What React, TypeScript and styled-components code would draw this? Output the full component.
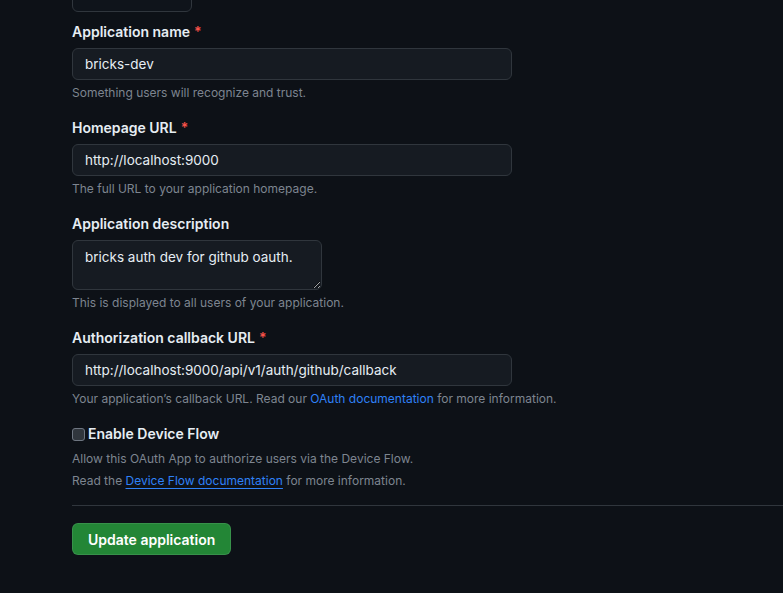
import React from "react";
import styled, { createGlobalStyle } from "styled-components";

const GlobalStyle = createGlobalStyle`
  html, body {
    margin: 0;
    padding: 0;
    background: #0d1117;
    overflow: hidden;
  }
  body {
    font-family: Inter, "Liberation Sans", sans-serif;
    color: #e6edf3;
  }
`;

const Page = styled.div`
  width: 783px;
  height: 593px;
  background: #0d1117;
  padding-left: 72px;
  box-sizing: border-box;
  overflow: hidden;
`;

const Form = styled.form`
  display: flex;
  flex-direction: column;
`;

// the button from the section above, cut off by the top of the view
const CutOffButton = styled.div`
  width: 120px;
  height: 32px;
  margin-top: -20px;
  margin-bottom: 10px;
  box-sizing: border-box;
  border: 1px solid #30363d;
  border-radius: 6px;
  background: #0f141b;
`;

const Group = styled.div`
  display: flex;
  flex-direction: column;
  margin-bottom: 16px;
`;

const Label = styled.label`
  font-size: 14px;
  font-weight: 600;
  line-height: 20px;
  margin-bottom: 6px;
  color: #e6edf3;
`;

const Required = styled.span`
  color: #f85149;
  margin-left: 4px;
  font-weight: 600;
`;

const TextInput = styled.input`
  width: 440px;
  height: 32px;
  box-sizing: border-box;
  padding: 5px 12px;
  font-family: Inter, "Liberation Sans", sans-serif;
  font-size: 13.5px;
  line-height: 20px;
  color: #e6edf3;
  background: #161b22;
  border: 1px solid #30363d;
  border-radius: 6px;
  outline: none;
`;

const TextArea = styled.textarea`
  width: 250px;
  height: 50px;
  box-sizing: border-box;
  padding: 6px 12px;
  font-family: Inter, "Liberation Sans", sans-serif;
  font-size: 13.5px;
  line-height: 20px;
  color: #e6edf3;
  background: #161b22;
  border: 1px solid #30363d;
  border-radius: 6px;
  outline: none;
  resize: both;
  color-scheme: dark;
`;

const Note = styled.p<{ $gap?: number }>`
  margin: ${(p) => p.$gap ?? 4}px 0 0;
  font-size: 12px;
  line-height: 18px;
  color: #7d8590;
`;

const Link = styled.a<{ $underline?: boolean }>`
  color: #2f81f7;
  text-decoration: ${(p) => (p.$underline ? "underline" : "none")};
  text-underline-offset: 3px;
`;

const CheckRow = styled.label`
  display: flex;
  align-items: center;
  gap: 3px;
  font-size: 14px;
  font-weight: 600;
  line-height: 20px;
  color: #e6edf3;
`;

const CheckBox = styled.span`
  width: 13px;
  height: 13px;
  box-sizing: border-box;
  border: 1px solid #6e7681;
  border-radius: 3px;
  background: #30363d;
`;

const Divider = styled.hr`
  margin: 15px 0 17px;
  border: 0;
  border-top: 1px solid #30363d;
  width: 100%;
`;

const SubmitButton = styled.button`
  align-self: flex-start;
  height: 32px;
  padding: 0 15px;
  font-family: Inter, "Liberation Sans", sans-serif;
  font-size: 14px;
  font-weight: 600;
  color: #ffffff;
  background: #238636;
  border: 1px solid rgba(240, 246, 252, 0.1);
  border-radius: 6px;
`;

const App: React.FC = () => {
  return (
    <>
      <GlobalStyle />
      <Page>
        <Form onSubmit={(e) => e.preventDefault()}>
          <CutOffButton />

          <Group>
            <Label>
              Application name<Required>*</Required>
            </Label>
            <TextInput defaultValue="bricks-dev" />
            <Note>Something users will recognize and trust.</Note>
          </Group>

          <Group>
            <Label>
              Homepage URL<Required>*</Required>
            </Label>
            <TextInput defaultValue="http://localhost:9000" />
            <Note>The full URL to your application homepage.</Note>
          </Group>

          <Group>
            <Label>Application description</Label>
            <TextArea defaultValue="bricks auth dev for github oauth." />
            <Note>This is displayed to all users of your application.</Note>
          </Group>

          <Group>
            <Label>
              Authorization callback URL<Required>*</Required>
            </Label>
            <TextInput defaultValue="http://localhost:9000/api/v1/auth/github/callback" />
            <Note>
              Your application’s callback URL. Read our{" "}
              <Link href="#">OAuth documentation</Link> for more information.
            </Note>
          </Group>

          <Group style={{ marginBottom: 0 }}>
            <CheckRow>
              <CheckBox />
              Enable Device Flow
            </CheckRow>
            <Note $gap={6}>Allow this OAuth App to authorize users via the Device Flow.</Note>
            <Note>
              Read the <Link href="#" $underline>Device Flow documentation</Link> for
              more information.
            </Note>
          </Group>

          <Divider />

          <SubmitButton type="submit">Update application</SubmitButton>
        </Form>
      </Page>
    </>
  );
};

export default App;
